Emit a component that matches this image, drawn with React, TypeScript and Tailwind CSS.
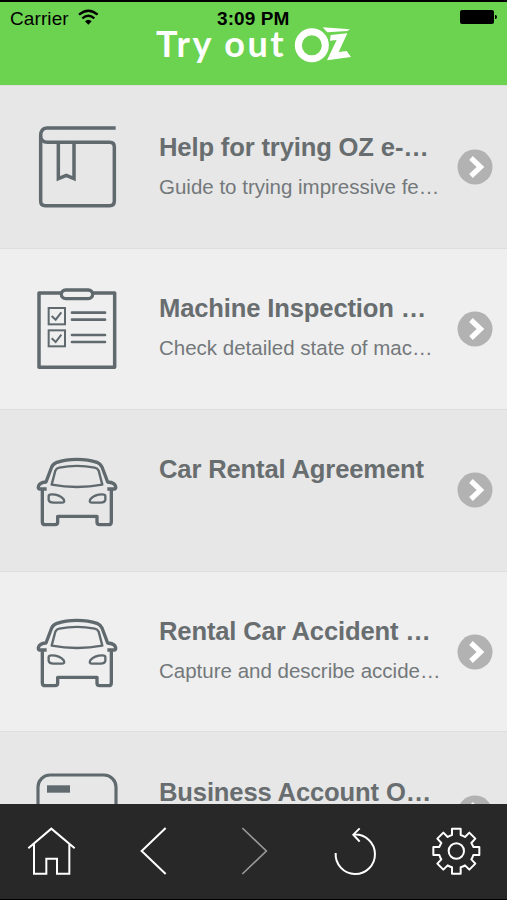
import type { ReactNode } from 'react';

const INK = '#5f696e';

function BookIcon() {
  return (
    <svg width="120" height="110" viewBox="0 0 360 330" fill="none" stroke={INK} strokeWidth="10.5">
      <path d="M287 54H82C68 54 62 64 62 76S69 97 82 97H269Q283 97 283 111V273Q283 287 269 287H76Q62 287 62 273V76" />
      <path d="M115 97V206L139 196L162 206V97" />
    </svg>
  );
}

function ClipboardIcon() {
  return (
    <svg width="120" height="110" viewBox="0 0 360 330" fill="none" stroke={INK} strokeWidth="10.5">
      <path d="M124 54H57V277H284V54H216" strokeLinejoin="round" />
      <rect x="124" y="45" width="94" height="26" rx="13" strokeWidth="10" />
      <g strokeWidth="6">
        <rect x="86" y="99" width="49" height="49" />
        <rect x="86" y="166" width="49" height="48" />
        <path d="M95 123L107 134L124 112M95 190L107 201L124 179" />
      </g>
      <path d="M156 113H255M156 134H255M156 180H255M156 201H255" strokeWidth="8" strokeLinecap="round" />
    </svg>
  );
}

function CarIcon() {
  return (
    <svg width="120" height="100" viewBox="0 0 360 300" fill="none" stroke={INK} strokeWidth="10" strokeLinejoin="round">
      <path d="M80 132H67V230Q67 239 75 239H105Q113 239 113 232V214H231V232Q231 239 239 239H266Q274 239 274 230V132H262M274 132H282Q288 132 287 125C285 116 276 112 263 111L246 66Q242 57 231 52C197 40 144 40 111 52Q99 57 95 66L78 111C64 112 57 117 55 125Q54 132 60 132H67" />
      <path d="M106 77Q109 70 118 68Q171 57 224 68Q233 70 236 77L247 119Q171 133 95 119Z" strokeWidth="7" />
      <path d="M86 153Q86 148 95 148Q119 148 131 163Q136 173 125 173H100Q88 173 86 165Z" strokeWidth="7" />
      <path d="M256 153Q256 148 247 148Q223 148 211 163Q206 173 217 173H242Q254 173 256 165Z" strokeWidth="7" />
    </svg>
  );
}

function CardIcon() {
  return (
    <svg width="120" height="110" viewBox="0 0 360 330" fill="none" stroke={INK} strokeWidth="9.5">
      <rect x="54" y="75" width="234" height="210" rx="36" />
      <rect x="81" y="106" width="69" height="22" fill={INK} stroke="none" />
    </svg>
  );
}

function Wifi() {
  return (
    <svg className="ml-[8px]" width="21" height="16" viewBox="0 0 63 48" fill="none" stroke="#000" strokeWidth="7">
      <path d="M3 17Q31 -7 59 17M13 28Q31 12 49 28" />
      <path d="M21 37Q31 27 41 37L31 47Z" fill="#000" stroke="none" />
    </svg>
  );
}

function OzLogo() {
  return (
    <svg className="-mt-px ml-[9px] shrink-0" width="58" height="40" viewBox="0 0 174 120" fill="#fff">
      <circle cx="53.5" cy="61" r="40.5" fill="none" stroke="#fff" strokeWidth="21" />
      <path d="M86 7L168 13L160 18L100 22Z" />
      <path d="M110 30L160 25L134 81L158 78L171 96L99 106L128 45L108 47Z" />
    </svg>
  );
}

interface Item {
  title: string;
  note: string;
  icon: ReactNode;
  row: string;
  iconTop: string;
  textTop: string;
  arrowTop: string;
}

const items: Item[] = [
  { title: 'Help for trying OZ e-…', note: 'Guide to trying impressive fe…', icon: <BookIcon />, row: 'h-[163px] bg-[#e7e7e7]', iconTop: 'pt-[25px]', textTop: 'pt-[45px]', arrowTop: 'mt-[62.5px]' },
  { title: 'Machine Inspection …', note: 'Check detailed state of mac…', icon: <ClipboardIcon />, row: 'h-[161px] bg-[#efefef]', iconTop: 'pt-[27px]', textTop: 'pt-[43px]', arrowTop: 'mt-[61.5px]' },
  { title: 'Car Rental Agreement', note: '', icon: <CarIcon />, row: 'h-[162px] bg-[#e7e7e7]', iconTop: 'pt-[36px]', textTop: 'pt-[43px]', arrowTop: 'mt-[62px]' },
  { title: 'Rental Car Accident …', note: 'Capture and describe accide…', icon: <CarIcon />, row: 'h-[160px] bg-[#efefef]', iconTop: 'pt-[35px]', textTop: 'pt-[43px]', arrowTop: 'mt-[61.5px]' },
  { title: 'Business Account O…', note: '', icon: <CardIcon />, row: 'h-[162px] bg-[#e7e7e7]', iconTop: 'pt-[19px]', textTop: 'pt-[44px]', arrowTop: 'mt-[63px]' },
];

function Row({ item }: { item: Item }) {
  return (
    <li className={`flex shrink-0 border-t border-[#dedede] ${item.row}`}>
      <div className={`-mt-px w-[159px] shrink-0 pl-5 ${item.iconTop}`}>{item.icon}</div>
      <div className={`w-[298px] shrink-0 whitespace-nowrap text-[#686d6f] ${item.textTop}`}>
        <h2 className="text-[25.6px] font-bold leading-[32px] tracking-[-0.15px]">{item.title}</h2>
        <p className="mt-[11px] text-[20.5px] leading-[26px] text-[#73787b]">{item.note}</p>
      </div>
      <svg className={`shrink-0 ${item.arrowTop}`} width="36" height="36" viewBox="0 0 36 36">
        <circle cx="18" cy="18" r="17.5" fill="#b2b2b2" />
        <path d="M14 9L23.5 18L14 27" fill="none" stroke="#fff" strokeWidth="5.2" />
      </svg>
    </li>
  );
}

function Toolbar() {
  return (
    <nav className="flex h-[96px] shrink-0 items-start border-b border-black bg-[#282828] pl-[26px] pt-[22px]">
      <svg width="51" height="52" viewBox="0 0 153 156" fill="none" stroke="#fff" strokeWidth="6">
        <path d="M7 67L76 8L146 67M24 55V143H61V98H93V143H130V55" />
      </svg>
      <svg className="ml-[61px]" width="32" height="52" viewBox="0 0 96 156" fill="none" stroke="#fff" strokeWidth="6">
        <path d="M83 6L11 75L83 144" />
      </svg>
      <svg className="ml-[70px]" width="32" height="52" viewBox="0 0 96 156" fill="none" stroke="#999" strokeWidth="5">
        <path d="M7 6L79 75L7 144" />
      </svg>
      <svg className="ml-[61px]" width="46" height="52" viewBox="0 0 138 156" fill="none" stroke="#fff" strokeWidth="6">
        <path d="M8 81A59 59 0 1 0 63 26M80 7L61 26L80 47" />
      </svg>
      <svg className="ml-[52px]" width="50" height="52" viewBox="0 0 150 156" fill="none" stroke="#fff" strokeWidth="6" strokeLinejoin="round">
        <path d="M63 8H89V27Q96 29 102 33L115 20L133 38L121 51Q125 57 127 63H145V87H127Q125 94 121 100L133 113L115 131L102 118Q96 122 89 124V143H63V124Q56 122 50 118L37 131L19 113L31 100Q27 94 25 87H7V63H25Q27 57 31 51L19 38L37 20L50 33Q56 29 63 27Z" />
        <circle cx="76" cy="75" r="23" />
      </svg>
    </nav>
  );
}

export default function App() {
  return (
    <main className="flex h-[900px] w-[507px] flex-col overflow-hidden bg-[#282828] font-['Liberation_Sans',Arial,sans-serif]">
      <header className="h-[85px] shrink-0 border-t-2 border-black bg-[#6cd350] text-black">
        <div className="flex h-[24px] items-start pl-[10px] text-[19px] leading-[34px]">
          <span className="w-[60px] tracking-[0.1px]">Carrier</span>
          <span className="flex w-[147px] pt-[7px]"><Wifi /></span>
          <span className="w-[242px] text-[19px] font-bold tracking-[0.1px]">3:09 PM</span>
          <svg className="mt-[7px]" width="40" height="16" viewBox="0 0 40 16">
            <rect x="1" y="1" width="34" height="14" rx="2" />
            <path d="M36 6H37Q39 8 37 10H36Z" />
          </svg>
        </div>
        <div className="flex items-start pl-[156px]">
          <h1 className="-mt-[3px] w-[129px] whitespace-nowrap font-['Lato',sans-serif] text-[36px] font-bold leading-[40px] tracking-[2.5px] text-white">Try out</h1>
          <OzLogo />
        </div>
      </header>
      <ul className="flex min-h-0 flex-1 flex-col overflow-hidden">
        {items.map((item) => <Row key={item.title} item={item} />)}
      </ul>
      <Toolbar />
    </main>
  );
}
